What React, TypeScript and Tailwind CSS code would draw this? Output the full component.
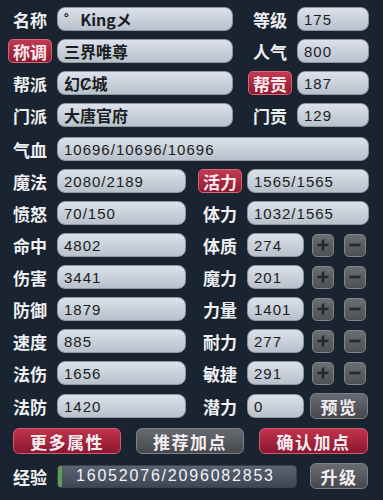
import React from "react";

const font = { fontFamily: '"Noto Sans CJK SC", "Liberation Sans", sans-serif' };
const numFont = { fontFamily: '"Liberation Sans", "Noto Sans CJK SC", sans-serif' };

function Label({ text, red }: { text: string; red?: boolean }) {
  if (red) {
    return (
      <div
        className="w-[44px] h-[24px] shrink-0 flex items-center justify-center rounded-[5px] border border-[#d5657a] bg-gradient-to-b from-[#c23a52] to-[#8e1a31] text-[17px] font-bold leading-none text-[#fbe9ee]"
        style={font}
      >
        {text}
      </div>
    );
  }
  return (
    <div
      className="w-[44px] h-[24px] shrink-0 flex items-center justify-center text-[17px] font-bold leading-none text-[#eef0f3]"
      style={font}
    >
      {text}
    </div>
  );
}

function Field({ value, w, cjk }: { value: string; w: string; cjk?: boolean }) {
  return (
    <div
      className={`${w} h-[24px] shrink-0 flex items-center pl-[6px] rounded-[8px] border border-[#8e96a3] bg-gradient-to-b from-[#dde2e9] to-[#b8c0cc] text-[#1b1d22] leading-none overflow-hidden whitespace-pre ${cjk ? "text-[16px] font-bold" : "text-[15px] tracking-[1px]"}`}
      style={cjk ? font : numFont}
    >
      {value}
    </div>
  );
}

function PM({ sign }: { sign: "+" | "-" }) {
  return (
    <div className="w-[22px] h-[23px] shrink-0 flex items-center justify-center rounded-[5px] border border-[#80858b] bg-gradient-to-b from-[#6a6e73] to-[#4d5156]">
      <svg width="14" height="14" viewBox="0 0 14 14">
        {sign === "+" ? (
          <path d="M7 1.5 V12.5 M1.5 7 H12.5" stroke="#25282c" strokeWidth="2.6" />
        ) : (
          <path d="M1.5 7 H12.5" stroke="#25282c" strokeWidth="2.6" />
        )}
      </svg>
    </div>
  );
}

function Btn({ text, red, w }: { text: string; red?: boolean; w: string }) {
  return (
    <div
      className={`${w} h-[26px] shrink-0 flex items-center justify-center rounded-[6px] border text-[17px] font-bold leading-none text-[#f5eef0] tracking-[1.5px] ${
        red
          ? "border-[#d05a6e] bg-gradient-to-b from-[#c2334c] to-[#8a1730]"
          : "border-[#7d8187] bg-gradient-to-b from-[#686c72] to-[#45484d]"
      }`}
      style={font}
    >
      {text}
    </div>
  );
}

export default function App() {
  const topRows: [string, boolean, string, boolean, string, string][] = [
    ["名称", false, "˚   Kingメ", false, "等级", "175"],
    ["称调", true, "三界唯尊", false, "人气", "800"],
    ["帮派", false, "幻Ȼ城", true, "帮贡", "187"],
    ["门派", false, "大唐官府", false, "门贡", "129"],
  ];
  const attrRows: [string, string, string, string][] = [
    ["命中", "4802", "体质", "274"],
    ["伤害", "3441", "魔力", "201"],
    ["防御", "1879", "力量", "1401"],
    ["速度", "885", "耐力", "277"],
    ["法伤", "1656", "敏捷", "291"],
  ];
  return (
    <div className="w-[383px] h-[500px] bg-[#1a2430] pl-[8px] pt-[7px] overflow-hidden">
      <div className="flex flex-col gap-[8px]">
        {topRows.map(([l, lr, v, rr, rl, rv]) => (
          <div key={l} className="flex items-center">
            <Label text={l} red={lr} />
            <div className="ml-[5px]">
              <Field value={v} w="w-[176px]" cjk />
            </div>
            <div className="ml-[15px]">
              <Label text={rl} red={rr} />
            </div>
            <div className="ml-[5px]">
              <Field value={rv} w="w-[72px]" />
            </div>
          </div>
        ))}
      </div>

      <div className="flex flex-col gap-[8px] mt-[10px]">
        <div className="flex items-center">
          <Label text="气血" />
          <div className="ml-[5px]">
            <Field value="10696/10696/10696" w="w-[312px]" />
          </div>
        </div>
        <div className="flex items-center">
          <Label text="魔法" />
          <div className="ml-[5px]">
            <Field value="2080/2189" w="w-[129px]" />
          </div>
          <div className="ml-[12px]">
            <Label text="活力" red />
          </div>
          <div className="ml-[5px]">
            <Field value="1565/1565" w="w-[122px]" />
          </div>
        </div>
        <div className="flex items-center">
          <Label text="愤怒" />
          <div className="ml-[5px]">
            <Field value="70/150" w="w-[129px]" />
          </div>
          <div className="ml-[12px]">
            <Label text="体力" />
          </div>
          <div className="ml-[5px]">
            <Field value="1032/1565" w="w-[122px]" />
          </div>
        </div>
        {attrRows.map(([l, v, rl, rv]) => (
          <div key={l} className="flex items-center">
            <Label text={l} />
            <div className="ml-[5px]">
              <Field value={v} w="w-[129px]" />
            </div>
            <div className="ml-[12px]">
              <Label text={rl} />
            </div>
            <div className="ml-[5px]">
              <Field value={rv} w="w-[57px]" />
            </div>
            <div className="ml-[8px]">
              <PM sign="+" />
            </div>
            <div className="ml-[10px]">
              <PM sign="-" />
            </div>
          </div>
        ))}
        <div className="flex items-center">
          <Label text="法防" />
          <div className="ml-[5px]">
            <Field value="1420" w="w-[129px]" />
          </div>
          <div className="ml-[12px]">
            <Label text="潜力" />
          </div>
          <div className="ml-[5px]">
            <Field value="0" w="w-[57px]" />
          </div>
          <div className="ml-[6px]">
            <Btn text="预览" w="w-[58px]" />
          </div>
        </div>
      </div>

      <div className="flex items-center mt-[9px] ml-[5px] gap-[15px]">
        <Btn text="更多属性" red w="w-[108px]" />
        <Btn text="推荐加点" w="w-[108px]" />
        <Btn text="确认加点" red w="w-[109px]" />
      </div>

      <div className="flex items-center mt-[9px]">
        <Label text="经验" />
        <div className="ml-[5px] w-[240px] h-[23px] flex items-center rounded-[4px] border border-[#3a414c] bg-gradient-to-b from-[#5b6372] to-[#3f4653] overflow-hidden">
          <div className="w-[4px] h-full bg-[#5f9a5a]" />
          <span
            className="ml-[14px] text-[16px] tracking-[1.8px] text-[#f2f4f7] leading-none whitespace-nowrap"
            style={numFont}
          >
            16052076/2096082853
          </span>
        </div>
        <div className="ml-[13px]">
          <Btn text="升级" w="w-[58px]" />
        </div>
      </div>
    </div>
  );
}
